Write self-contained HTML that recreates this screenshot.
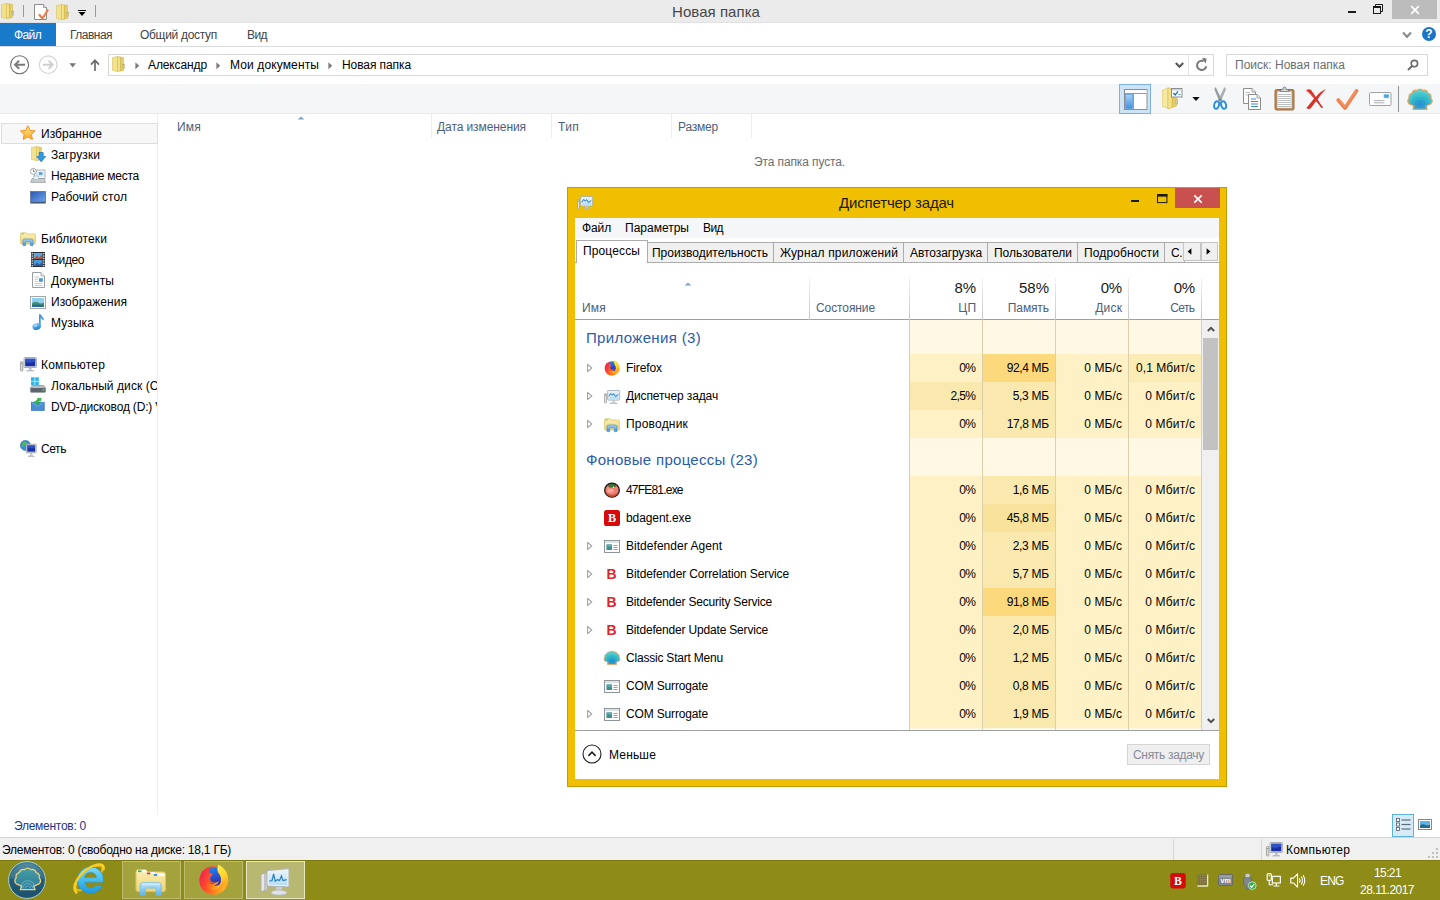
<!DOCTYPE html>
<html><head><meta charset="utf-8"><title>Desktop</title>
<style>
*{box-sizing:border-box;margin:0;padding:0}
html,body{width:1440px;height:900px;overflow:hidden;background:#fff;font-family:"Liberation Sans",sans-serif;font-size:12px;color:#000}
.a{position:absolute}
.t{position:absolute;white-space:nowrap}
svg{overflow:visible}
</style></head><body>
<svg width="0" height="0" style="position:absolute"><defs>
<linearGradient id="gFold" x1="0" y1="0" x2="1" y2="0"><stop offset="0" stop-color="#f7eaa0"/><stop offset="0.45" stop-color="#efd96f"/><stop offset="0.5" stop-color="#d9bf55"/><stop offset="1" stop-color="#f2df7e"/></linearGradient>
<linearGradient id="gFoldV" x1="0" y1="0" x2="0" y2="1"><stop offset="0" stop-color="#fbf0b8"/><stop offset="1" stop-color="#edd373"/></linearGradient>
<linearGradient id="gBlueV" x1="0" y1="0" x2="0" y2="1"><stop offset="0" stop-color="#a9d2f7"/><stop offset="1" stop-color="#3d8fe0"/></linearGradient>
<linearGradient id="gDesk" x1="0" y1="0" x2="1" y2="1"><stop offset="0" stop-color="#2a57b5"/><stop offset="1" stop-color="#6ea4ea"/></linearGradient>
<linearGradient id="gStar" x1="0" y1="0" x2="0" y2="1"><stop offset="0" stop-color="#ffe88a"/><stop offset="1" stop-color="#f9a825"/></linearGradient>
<radialGradient id="gShell" cx="0.5" cy="0.75" r="0.75"><stop offset="0" stop-color="#2b8fd8"/><stop offset="0.45" stop-color="#2fb6c9"/><stop offset="1" stop-color="#5fdad4"/></radialGradient>
<linearGradient id="gOrb" x1="0" y1="0" x2="0" y2="1"><stop offset="0" stop-color="#3f8297"/><stop offset="0.5" stop-color="#235c78"/><stop offset="1" stop-color="#1b4f6e"/></linearGradient>
<radialGradient id="gFx" cx="0.5" cy="0.3" r="0.8"><stop offset="0" stop-color="#ffd43b"/><stop offset="0.45" stop-color="#ff9a1f"/><stop offset="0.8" stop-color="#f2443a"/><stop offset="1" stop-color="#d81f5a"/></radialGradient>
<linearGradient id="gMon" x1="0" y1="0" x2="0" y2="1"><stop offset="0" stop-color="#e8f4fc"/><stop offset="1" stop-color="#b8dcf2"/></linearGradient>
<linearGradient id="gMusic" x1="0" y1="0" x2="0" y2="1"><stop offset="0" stop-color="#7cc4f5"/><stop offset="1" stop-color="#1c7fd6"/></linearGradient>
<linearGradient id="gFxL" x1="0" y1="0.3" x2="1" y2="0.7"><stop offset="0" stop-color="#f0264f"/><stop offset="0.35" stop-color="#ff4a2a"/><stop offset="0.7" stop-color="#ff8a1c"/><stop offset="1" stop-color="#ffc52a"/></linearGradient>
<linearGradient id="gFxY" x1="0" y1="0" x2="0.3" y2="1"><stop offset="0" stop-color="#fff04a"/><stop offset="0.6" stop-color="#ffcf2e"/><stop offset="1" stop-color="#ff9a1e"/></linearGradient>
<linearGradient id="gGlobe" x1="0" y1="0" x2="0.2" y2="1"><stop offset="0" stop-color="#1f86f2"/><stop offset="0.55" stop-color="#2455d8"/><stop offset="1" stop-color="#3b2a9a"/></linearGradient>
<linearGradient id="gIE" x1="0" y1="0" x2="0" y2="1"><stop offset="0" stop-color="#7fdcfa"/><stop offset="0.5" stop-color="#45bdee"/><stop offset="1" stop-color="#1f9ada"/></linearGradient>
<linearGradient id="gOrbShell" x1="0" y1="0" x2="0" y2="1"><stop offset="0" stop-color="#46a0a6"/><stop offset="1" stop-color="#2a7894"/></linearGradient>
<linearGradient id="gBlueL" x1="0" y1="0" x2="0" y2="1"><stop offset="0" stop-color="#c4e8fa"/><stop offset="1" stop-color="#58b4ea"/></linearGradient>
</defs></svg>
<div class="a" style="left:0px;top:0px;width:1440px;height:23px;background:#ebebeb;"></div>
<div class="a" style="left:0px;top:23px;width:1440px;height:24px;background:#fff;border-bottom:1px solid #dadbdc"></div>
<div class="a" style="left:0px;top:23px;width:56px;height:23px;background:#1979ca;"></div>
<div class="a" style="left:108px;top:54px;width:1106px;height:22px;background:#fff;border:1px solid #d9d9d9"></div>
<div class="a" style="left:1188px;top:55px;width:1px;height:20px;background:#e3e3e3;"></div>
<div class="a" style="left:1226px;top:54px;width:202px;height:22px;background:#fff;border:1px solid #d9d9d9"></div>
<div class="a" style="left:0px;top:84px;width:1440px;height:30px;background:#f5f6f7;border-bottom:1px solid #e8e9ea"></div>
<div class="a" style="left:157px;top:114px;width:1px;height:701px;background:#f0f0f0;"></div>
<div class="a" style="left:0px;top:837px;width:1440px;height:23px;background:#f0f0f0;border-top:1px solid #d4d4d4"></div>
<div class="t" style="left:672.00px;top:1.5px;font-size:15px;line-height:19px;height:19px;color:#474747;letter-spacing:0.051px;">Новая папка</div>
<div class="t" style="left:14.00px;top:27.0px;font-size:12px;line-height:16px;height:16px;color:#fff;letter-spacing:-0.625px;">Файл</div>
<div class="t" style="left:70.00px;top:27.0px;font-size:12px;line-height:16px;height:16px;color:#444;letter-spacing:-0.525px;">Главная</div>
<div class="t" style="left:140.00px;top:27.0px;font-size:12px;line-height:16px;height:16px;color:#444;letter-spacing:-0.302px;">Общий доступ</div>
<div class="t" style="left:247.00px;top:27.0px;font-size:12px;line-height:16px;height:16px;color:#444;letter-spacing:-0.568px;">Вид</div>
<div class="t" style="left:148.00px;top:57.0px;font-size:12px;line-height:16px;height:16px;color:#000;letter-spacing:-0.115px;">Александр</div>
<div class="t" style="left:230.00px;top:57.0px;font-size:12px;line-height:16px;height:16px;color:#000;letter-spacing:0.120px;">Мои документы</div>
<div class="t" style="left:342.00px;top:57.0px;font-size:12px;line-height:16px;height:16px;color:#000;letter-spacing:-0.085px;">Новая папка</div>
<div class="t" style="left:1235.00px;top:57.0px;font-size:12px;line-height:16px;height:16px;color:#6d6d6d;letter-spacing:0.009px;">Поиск: Новая папка</div>
<div class="t" style="left:177.00px;top:119.0px;font-size:12px;line-height:16px;height:16px;color:#4c607a;letter-spacing:0.208px;">Имя</div>
<div class="t" style="left:437.00px;top:119.0px;font-size:12px;line-height:16px;height:16px;color:#4c607a;letter-spacing:-0.081px;">Дата изменения</div>
<div class="t" style="left:558.00px;top:119.0px;font-size:12px;line-height:16px;height:16px;color:#4c607a;letter-spacing:0.333px;">Тип</div>
<div class="t" style="left:678.00px;top:119.0px;font-size:12px;line-height:16px;height:16px;color:#4c607a;letter-spacing:-0.206px;">Размер</div>
<div class="a" style="left:431px;top:114px;width:1px;height:24px;background:#ececec;"></div>
<div class="a" style="left:551px;top:114px;width:1px;height:24px;background:#ececec;"></div>
<div class="a" style="left:671px;top:114px;width:1px;height:24px;background:#ececec;"></div>
<div class="a" style="left:751px;top:114px;width:1px;height:24px;background:#ececec;"></div>
<div class="t" style="left:754.00px;top:154.0px;font-size:12px;line-height:16px;height:16px;color:#6d6d6d;letter-spacing:-0.118px;">Эта папка пуста.</div>
<div class="a" style="left:1px;top:123px;width:157px;height:21px;background:#f7f7f7;border:1px solid #dedede"></div>
<div class="t" style="left:41.00px;top:126.0px;font-size:12px;line-height:16px;height:16px;color:#000;letter-spacing:0.023px;">Избранное</div>
<div class="t" style="left:51.00px;top:147.0px;font-size:12px;line-height:16px;height:16px;color:#000;letter-spacing:0.090px;">Загрузки</div>
<div class="t" style="left:51.00px;top:168.0px;font-size:12px;line-height:16px;height:16px;color:#000;letter-spacing:-0.243px;">Недавние места</div>
<div class="t" style="left:51.00px;top:189.0px;font-size:12px;line-height:16px;height:16px;color:#000;letter-spacing:0.057px;">Рабочий стол</div>
<div class="t" style="left:41.00px;top:231.0px;font-size:12px;line-height:16px;height:16px;color:#000;letter-spacing:0.098px;">Библиотеки</div>
<div class="t" style="left:51.00px;top:252.0px;font-size:12px;line-height:16px;height:16px;color:#000;letter-spacing:-0.409px;">Видео</div>
<div class="t" style="left:51.00px;top:273.0px;font-size:12px;line-height:16px;height:16px;color:#000;letter-spacing:0.127px;">Документы</div>
<div class="t" style="left:51.00px;top:294.0px;font-size:12px;line-height:16px;height:16px;color:#000;letter-spacing:0.054px;">Изображения</div>
<div class="t" style="left:51.00px;top:315.0px;font-size:12px;line-height:16px;height:16px;color:#000;letter-spacing:0.091px;">Музыка</div>
<div class="t" style="left:41.00px;top:357.0px;font-size:12px;line-height:16px;height:16px;color:#000;letter-spacing:0.212px;">Компьютер</div>
<div class="t" style="left:41.00px;top:441.0px;font-size:12px;line-height:16px;height:16px;color:#000;letter-spacing:-0.426px;">Сеть</div>
<div class="t" style="left:51.00px;top:378.0px;font-size:12px;line-height:16px;height:16px;color:#000;letter-spacing:0.076px;width:106px;overflow:hidden;">Локальный диск (C:)</div>
<div class="t" style="left:51.00px;top:399.0px;font-size:12px;line-height:16px;height:16px;color:#000;letter-spacing:-0.170px;width:106px;overflow:hidden;">DVD-дисковод (D:) VM</div>
<div class="t" style="left:14.00px;top:818.0px;font-size:12px;line-height:16px;height:16px;color:#1e3287;letter-spacing:-0.266px;">Элементов: 0</div>
<div class="t" style="left:2.00px;top:842.0px;font-size:12px;line-height:16px;height:16px;color:#000;letter-spacing:-0.230px;">Элементов: 0 (свободно на диске: 18,1 ГБ)</div>
<div class="t" style="left:1286.00px;top:842.0px;font-size:12px;line-height:16px;height:16px;color:#000;letter-spacing:0.212px;">Компьютер</div>
<div class="a" style="left:1173px;top:839px;width:1px;height:21px;background:#d7d7d7;"></div>
<div class="a" style="left:1261px;top:839px;width:1px;height:21px;background:#d7d7d7;"></div>
<svg class="a" style="left:1px;top:3px" width="13" height="16" viewBox="0 0 13 16"><path d="M0.5 1.5 L5.5 0.5 L5.5 15.5 L0.5 14.5 Z" fill="#f3e28d" stroke="#d8c25e" stroke-width="0.6"/><path d="M5.5 0.5 L11.5 1.5 L11.5 14.5 L5.5 15.5 Z" fill="url(#gFold)" stroke="#cdb352" stroke-width="0.6"/><rect x="10.8" y="8.0" width="1.8" height="4.48" fill="#c9c29a" stroke="#b5a85e" stroke-width="0.4"/></svg>
<div class="a" style="left:23px;top:5px;width:1px;height:12px;background:#9a9a9a;"></div>
<svg class="a" style="left:34px;top:4px" width="15" height="16" viewBox="0 0 15 16"><path d="M0.5 0.5 H9.5 L12.5 3.5 V15.5 H0.5 Z" fill="#fff" stroke="#8c8c8c" stroke-width="1"/><path d="M9.5 0.5 V3.5 H12.5" fill="#e8e8e8" stroke="#8c8c8c" stroke-width="0.8"/><path d="M5.5 11 L8.5 14.5 L13.5 6.5" fill="none" stroke="#ef7b45" stroke-width="2.2" stroke-linecap="round" stroke-linejoin="round"/></svg>
<svg class="a" style="left:56px;top:4px" width="13" height="16" viewBox="0 0 13 16"><path d="M0.5 1.5 L5.5 0.5 L5.5 15.5 L0.5 14.5 Z" fill="#f3e28d" stroke="#d8c25e" stroke-width="0.6"/><path d="M5.5 0.5 L11.5 1.5 L11.5 14.5 L5.5 15.5 Z" fill="url(#gFold)" stroke="#cdb352" stroke-width="0.6"/><rect x="10.8" y="8.0" width="1.8" height="4.48" fill="#c9c29a" stroke="#b5a85e" stroke-width="0.4"/></svg>
<div class="a" style="left:78px;top:10px;width:8px;height:1px;background:#000;"></div>
<svg class="a" style="left:78px;top:12px" width="8" height="4" viewBox="0 0 8 4"><path d="M0.5 0 H7.5 L4 4 Z" fill="#000"/></svg>
<div class="a" style="left:95px;top:5px;width:1px;height:12px;background:#9a9a9a;"></div>
<div class="a" style="left:1348px;top:11px;width:8px;height:2px;background:#1a1a1a;"></div>
<svg class="a" style="left:1372px;top:4px" width="12" height="11" viewBox="0 0 12 11"><path d="M3.5 2.5 V0.5 H10.5 V7.5 H8.5" fill="none" stroke="#1a1a1a" stroke-width="1"/><rect x="1.5" y="2.5" width="7" height="7" fill="none" stroke="#1a1a1a" stroke-width="1"/><rect x="1" y="2" width="8" height="2" fill="#1a1a1a"/></svg>
<div class="a" style="left:1392px;top:0px;width:45px;height:19px;background:#bcbcbc;"></div>
<svg class="a" style="left:1410px;top:4.6px" width="10" height="10" viewBox="0 0 10 10"><path d="M1.2 1.2 L8.8 8.8 M8.8 1.2 L1.2 8.8" stroke="#fff" stroke-width="1.7"/></svg>
<div class="a" style="left:0px;top:22px;width:1440px;height:1px;background:#e2e2e2;"></div>
<svg class="a" style="left:1402px;top:31px" width="10" height="8" viewBox="0 0 10 8"><path d="M1 1.5 L5 5.8 L9 1.5" fill="none" stroke="#8c8c8c" stroke-width="2.2"/></svg>
<svg class="a" style="left:1422px;top:27px" width="14" height="14" viewBox="0 0 14 14"><circle cx="7" cy="7" r="7" fill="#1b74c9"/><text x="7" y="11.3" font-family="Liberation Sans,sans-serif" font-weight="bold" font-size="12" fill="#fff" text-anchor="middle">?</text></svg>
<svg class="a" style="left:10px;top:55px" width="20" height="20" viewBox="0 0 20 20"><circle cx="9.6" cy="9.7" r="9" fill="none" stroke="#6e6e6e" stroke-width="1.1"/><path d="M15 9.7 H5.2 M9.2 5.6 L5 9.7 L9.2 13.8" fill="none" stroke="#7a7a7a" stroke-width="1.9"/></svg>
<svg class="a" style="left:38px;top:55px" width="20" height="20" viewBox="0 0 20 20"><circle cx="10.2" cy="9.7" r="8.8" fill="none" stroke="#d2d2d2" stroke-width="1.1"/><path d="M4.8 9.7 H14.6 M10.6 5.6 L14.8 9.7 L10.6 13.8" fill="none" stroke="#cfcfcf" stroke-width="1.9"/></svg>
<svg class="a" style="left:69px;top:63px" width="8" height="5" viewBox="0 0 8 5"><path d="M0.4 0.2 H7 L3.7 4.4 Z" fill="#777"/></svg>
<svg class="a" style="left:90px;top:59px" width="10" height="13" viewBox="0 0 10 13"><path d="M5 12 V1.6 M1 5.6 L5 1.2 L9 5.6" fill="none" stroke="#6a6a6a" stroke-width="1.7"/></svg>
<svg class="a" style="left:112px;top:56px" width="13" height="16" viewBox="0 0 13 16"><path d="M0.5 1.5 L5.5 0.5 L5.5 15.5 L0.5 14.5 Z" fill="#f3e28d" stroke="#d8c25e" stroke-width="0.6"/><path d="M5.5 0.5 L11.5 1.5 L11.5 14.5 L5.5 15.5 Z" fill="url(#gFold)" stroke="#cdb352" stroke-width="0.6"/><rect x="10.8" y="8.0" width="1.8" height="4.48" fill="#c9c29a" stroke="#b5a85e" stroke-width="0.4"/></svg>
<svg class="a" style="left:135px;top:62px" width="5" height="8" viewBox="0 0 5 8"><path d="M0.4 0.3 L4.2 3.8 L0.4 7.3 Z" fill="#7a7a7a"/></svg>
<svg class="a" style="left:216px;top:62px" width="5" height="8" viewBox="0 0 5 8"><path d="M0.4 0.3 L4.2 3.8 L0.4 7.3 Z" fill="#7a7a7a"/></svg>
<svg class="a" style="left:328px;top:62px" width="5" height="8" viewBox="0 0 5 8"><path d="M0.4 0.3 L4.2 3.8 L0.4 7.3 Z" fill="#7a7a7a"/></svg>
<svg class="a" style="left:1175px;top:62px" width="9" height="7" viewBox="0 0 9 7"><path d="M0.8 1 L4.5 4.8 L8.2 1" fill="none" stroke="#555" stroke-width="2"/></svg>
<svg class="a" style="left:1195px;top:58px" width="13" height="14" viewBox="0 0 13 14"><path d="M8.6 3.2 A4.6 4.6 0 1 0 11.2 8.2" fill="none" stroke="#777" stroke-width="2"/><path d="M6.8 0 L11.6 0.6 L10.6 5.6 Z" fill="#777"/></svg>
<svg class="a" style="left:1407px;top:59px" width="12" height="12" viewBox="0 0 12 12"><circle cx="7.4" cy="4.6" r="3.2" fill="none" stroke="#6a6a6a" stroke-width="1.6"/><path d="M5 7 L1 11" stroke="#6a6a6a" stroke-width="2"/></svg>
<div class="a" style="left:1119px;top:84px;width:32px;height:30px;background:#cde4f8;border:1px solid #7ab0e6"></div>
<svg class="a" style="left:1124px;top:89px" width="24" height="21" viewBox="0 0 24 21"><rect x="0.5" y="0.5" width="22.5" height="20" fill="#fff" stroke="#8d8d8d" stroke-width="1"/><rect x="1" y="1" width="21.5" height="3.5" fill="#fdfdfd"/><path d="M1 4.5 H22.5" stroke="#9a9a9a" stroke-width="1"/><rect x="1.5" y="5.5" width="7" height="14" fill="url(#gBlueV)" stroke="#5a9fe2" stroke-width="0.8"/><path d="M9.5 5 V20" stroke="#9a9a9a" stroke-width="1"/></svg>
<svg class="a" style="left:1162px;top:87px" width="21" height="23" viewBox="0 0 21 23"><path d="M0.5 3 L6 0.8 L6 21 L0.5 19.5 Z" fill="#f6e9a0" stroke="#dcc76a" stroke-width="0.6"/><path d="M6 0.8 L14.5 3.5 L14.5 19 L6 22 Z" fill="url(#gFold)" stroke="#cdb352" stroke-width="0.6"/><rect x="13.6" y="12" width="2.2" height="5" fill="#cfc8a0" stroke="#b5a85e" stroke-width="0.4"/><rect x="9.5" y="1.5" width="10.5" height="8.5" fill="#fff" stroke="#8a8f96" stroke-width="1"/><rect x="10" y="2" width="9.5" height="1.6" fill="#c9d4e2"/><path d="M11.4 6 L13.2 8 L16 4.4" fill="none" stroke="#1d6fc4" stroke-width="1.3"/><path d="M16.5 7.5 H18.5" stroke="#4a86c8" stroke-width="1"/></svg>
<svg class="a" style="left:1192px;top:97px" width="8" height="4" viewBox="0 0 8 4"><path d="M0.3 0 H7.7 L4 4 Z" fill="#111"/></svg>
<svg class="a" style="left:1213px;top:87px" width="15" height="23" viewBox="0 0 15 23"><path d="M2.6 0.6 L8.6 13.2 L6.6 14.2 L1.8 2.4 Z" fill="#9a9fa6" stroke="#7d838a" stroke-width="0.5"/><path d="M11.6 0.6 L5.6 13.2 L7.6 14.2 L12.4 2.4 Z" fill="#b4b9bf" stroke="#7d838a" stroke-width="0.5"/><ellipse cx="3.6" cy="18" rx="2.4" ry="3.8" transform="rotate(18 3.6 18)" fill="none" stroke="#2c8fdc" stroke-width="1.9"/><ellipse cx="10.6" cy="18" rx="2.4" ry="3.8" transform="rotate(-18 10.6 18)" fill="none" stroke="#2c8fdc" stroke-width="1.9"/><circle cx="7.1" cy="12.6" r="1" fill="#6d7379"/></svg>
<svg class="a" style="left:1243px;top:88px" width="19" height="22" viewBox="0 0 19 22"><path d="M0.5 0.5 H9 L12.5 4 V15.5 H0.5 Z" fill="#fff" stroke="#8d8d8d" stroke-width="1"/><path d="M9 0.5 V4 H12.5" fill="#eee" stroke="#8d8d8d" stroke-width="0.8"/><path d="M2.5 4.5 H7 M2.5 7 H5" stroke="#b5b5b5" stroke-width="0.9"/><path d="M5.5 6.5 H14 L17.5 10 V21.5 H5.5 Z" fill="#fff" stroke="#8d8d8d" stroke-width="1"/><path d="M14 6.5 V10 H17.5" fill="#eee" stroke="#8d8d8d" stroke-width="0.8"/><path d="M8 11 H13 M8 13.5 H15 M8 16 H15 M8 18.5 H15" stroke="#3e8fd0" stroke-width="1"/></svg>
<svg class="a" style="left:1274px;top:86px" width="21" height="25" viewBox="0 0 21 25"><rect x="1" y="3.5" width="19" height="20.5" rx="1.5" fill="#b8895a" stroke="#9b6f40" stroke-width="1"/><rect x="3.2" y="5.5" width="14.6" height="16.5" fill="#fff" stroke="#c7b8a4" stroke-width="0.5"/><path d="M4 8.5 H17 M4 10.5 H17 M4 12.5 H17 M4 14.5 H17 M4 16.5 H17 M4 18.5 H17 M4 20.5 H17" stroke="#a9adb3" stroke-width="0.8"/><path d="M6 5.6 Q6 3.6 8.6 3.4 Q9 1 10.5 1 Q12 1 12.4 3.4 Q15 3.6 15 5.6 Z" fill="#d7d9dc" stroke="#70757b" stroke-width="0.8"/><circle cx="10.5" cy="2.8" r="0.8" fill="#fff" stroke="#70757b" stroke-width="0.4"/></svg>
<svg class="a" style="left:1305px;top:88px" width="22" height="22" viewBox="0 0 22 22"><path d="M1 2.2 Q4.5 0.6 6 2 Q9.5 6.5 10.8 9 Q15 3.5 21 1 Q16.8 5.2 12.6 11.2 Q15 15.5 18.2 19.6 Q16.5 20.4 15.6 19 Q13.4 15.6 11 13.2 Q8 17.5 5.6 20.6 Q3 21.4 1.4 20 Q5.6 15 9 10.6 Q5.5 5.6 1 2.2 Z" fill="#d4342a"/><path d="M2 2.4 Q5.6 5.4 9.4 10.4" stroke="#e9665c" stroke-width="0.8" fill="none"/></svg>
<svg class="a" style="left:1336px;top:88px" width="23" height="23" viewBox="0 0 23 23"><path d="M2.2 12 L9 20 L20.6 2.8" fill="none" stroke="#ee7d46" stroke-width="3.6" stroke-linecap="round" stroke-linejoin="round"/><path d="M2.6 11.6 L9 19 L20.2 2.6" fill="none" stroke="#f7a277" stroke-width="1" stroke-linecap="round" stroke-linejoin="round"/></svg>
<svg class="a" style="left:1369px;top:92px" width="23" height="14" viewBox="0 0 23 14"><rect x="0.5" y="0.5" width="21.5" height="13" rx="1" fill="#fdfdfd" stroke="#9ea3a9" stroke-width="1"/><rect x="15" y="2.5" width="4.8" height="3.4" fill="#4aa3df" stroke="#7fc0ea" stroke-width="0.5"/><path d="M5 8.6 H15.5 M5 10.8 H15.5" stroke="#a4a8ad" stroke-width="0.9"/></svg>
<div class="a" style="left:1398px;top:86px;width:1px;height:26px;background:#8f8f8f;"></div>
<svg class="a" style="left:1408px;top:89px" width="24" height="21" viewBox="0 0 24 21"><path d="M5 20.4 L6.4 17 L1.29 14.96 Q-1.49 12.19 1.11 9.27 Q0.18 5.48 3.96 4.28 Q5.13 0.52 9.05 1.38 Q12.00 -1.30 14.95 1.38 Q18.87 0.52 20.04 4.28 Q23.82 5.48 22.89 9.27 Q25.49 12.19 22.71 14.96 L17.6 17 L19 20.4 Z" fill="url(#gShell)" stroke="#e9a15c" stroke-width="1.2" stroke-linejoin="round"/><path d="M9.6 19.31 A2.4 2.4 0 0 1 14.4 19.31" fill="none" stroke="#1f86c8" stroke-opacity="0.5" stroke-width="1"/><path d="M7.4 19.05 A4.6 4.6 0 0 1 16.6 19.05" fill="none" stroke="#1f86c8" stroke-opacity="0.5" stroke-width="1"/><path d="M5.2 18.78 A6.8 6.8 0 0 1 18.8 18.78" fill="none" stroke="#1f86c8" stroke-opacity="0.5" stroke-width="1"/></svg>
<svg class="a" style="left:20px;top:125px" width="16" height="15" viewBox="0 0 16 15"><path d="M7.8 0.7 L10 5.3 L15.2 5.9 L11.4 9.4 L12.4 14.4 L7.8 11.9 L3.2 14.4 L4.2 9.4 L0.4 5.9 L5.6 5.3 Z" fill="url(#gStar)" stroke="#f0932b" stroke-width="1" stroke-linejoin="round"/></svg>
<svg class="a" style="left:31px;top:146px" width="15" height="17" viewBox="0 0 15 17"><path d="M0.5 1.5 L5.5 0.5 L5.5 14.5 L0.5 13.5 Z" fill="#f3e28d" stroke="#d8c25e" stroke-width="0.6"/><path d="M5.5 0.5 L10.5 1.5 L10.5 13.5 L5.5 14.5 Z" fill="url(#gFold)" stroke="#cdb352" stroke-width="0.6"/><rect x="9.8" y="7.5" width="1.8" height="4.2" fill="#c9c29a" stroke="#b5a85e" stroke-width="0.4"/><path d="M8.2 6.5 H12.2 V10.5 H14.6 L10.2 15.8 L5.8 10.5 H8.2 Z" fill="#2f9be6" stroke="#1673c4" stroke-width="0.7"/></svg>
<svg class="a" style="left:30px;top:168px" width="16" height="15" viewBox="0 0 16 15"><rect x="4.5" y="2" width="10.5" height="8.5" fill="#f4f6f8" stroke="#9aa0a6" stroke-width="0.8"/><rect x="6" y="3.4" width="7.5" height="5" fill="#d8e9f6"/><rect x="9" y="4.2" width="3.4" height="2.6" fill="#4d9fdc"/><path d="M2.2 10.5 H14 L15.6 14.4 H0.6 Z" fill="#c9cdd1" stroke="#8f959b" stroke-width="0.7"/><rect x="3.6" y="8" width="5" height="3.2" fill="#e9f2f9" stroke="#8aa" stroke-width="0.5"/><circle cx="3.4" cy="3.4" r="3" fill="#fafafa" stroke="#8f959b" stroke-width="0.8"/><path d="M3.4 1.6 V3.6 H5" fill="none" stroke="#555" stroke-width="0.7"/></svg>
<svg class="a" style="left:30px;top:191px" width="16" height="13" viewBox="0 0 16 13"><rect x="0.5" y="0.5" width="15" height="10.2" fill="url(#gDesk)" stroke="#5b6f9a" stroke-width="0.8"/><rect x="0.3" y="10.4" width="15.4" height="2.1" fill="#3a4a6b"/><rect x="0.3" y="10.4" width="15.4" height="0.8" fill="#8796b8"/></svg>
<svg class="a" style="left:20px;top:232px" width="16" height="14" viewBox="0 0 16 14"><path d="M0.6 2.4 Q0.6 0.8 2 0.8 H6 L7.2 2 H14.2 Q15.4 2 15.4 3.2 V11 Q15.4 12 14.4 12 H1.6 Q0.6 12 0.6 11 Z" fill="url(#gFoldV)" stroke="#dcc463" stroke-width="0.8"/><rect x="1.4" y="1.4" width="2.2" height="1" fill="#7cc24a"/><path d="M3 13.6 V8.6 Q3 7 4.6 7 H11.4 Q13 7 13 8.6 V13.6 H10.4 V10.4 Q10.4 9.8 9.8 9.8 H6.2 Q5.6 9.8 5.6 10.4 V13.6 Z" fill="url(#gBlueV)" stroke="#2f86d6" stroke-width="0.6"/></svg>
<svg class="a" style="left:31px;top:252px" width="14" height="15" viewBox="0 0 14 15"><rect x="0" y="0" width="14" height="15" fill="#2d2f33"/><rect x="2.6" y="1" width="8.8" height="6" fill="#5aa9e6"/><rect x="2.6" y="8" width="8.8" height="6" fill="#4a9ae0"/><path d="M2.6 7 L6 3.6 L8 5.4 L11.4 2.4 V7 Z" fill="#b0583a"/><path d="M2.6 14 L6 10.5 L8.4 12.6 L11.4 10 V14 Z" fill="#2c5c9c"/><rect x="0.6" y="1.0" width="1.3" height="1.3" fill="#e9e9e9"/><rect x="12.1" y="1.0" width="1.3" height="1.3" fill="#e9e9e9"/><rect x="0.6" y="3.4" width="1.3" height="1.3" fill="#e9e9e9"/><rect x="12.1" y="3.4" width="1.3" height="1.3" fill="#e9e9e9"/><rect x="0.6" y="5.8" width="1.3" height="1.3" fill="#e9e9e9"/><rect x="12.1" y="5.8" width="1.3" height="1.3" fill="#e9e9e9"/><rect x="0.6" y="8.2" width="1.3" height="1.3" fill="#e9e9e9"/><rect x="12.1" y="8.2" width="1.3" height="1.3" fill="#e9e9e9"/><rect x="0.6" y="10.6" width="1.3" height="1.3" fill="#e9e9e9"/><rect x="12.1" y="10.6" width="1.3" height="1.3" fill="#e9e9e9"/><rect x="0.6" y="13.0" width="1.3" height="1.3" fill="#e9e9e9"/><rect x="12.1" y="13.0" width="1.3" height="1.3" fill="#e9e9e9"/></svg>
<svg class="a" style="left:32px;top:272px" width="14" height="16" viewBox="0 0 14 16"><path d="M0.5 0.5 H9 L12.5 4 V15.5 H0.5 Z" fill="#fff" stroke="#9a9ea3" stroke-width="1"/><path d="M9 0.5 V4 H12.5" fill="#eceff2" stroke="#9a9ea3" stroke-width="0.8"/><path d="M2.5 5 H7 M2.5 7.2 H6 M2.5 9.4 H6 M2.5 11.6 H10.5 M2.5 13.6 H10.5" stroke="#b7c3d0" stroke-width="0.9"/><rect x="7" y="6.2" width="3.8" height="3.6" fill="#4b94d8"/></svg>
<svg class="a" style="left:30px;top:296px" width="16" height="13" viewBox="0 0 16 13"><rect x="0.5" y="0.5" width="15" height="12" fill="#fdfdfd" stroke="#a2a7ad" stroke-width="1"/><rect x="2" y="2" width="12" height="9" fill="#8fd0ee"/><path d="M2 7.5 Q5 4.6 8 6.6 Q11 8.4 14 6.4 V11 H2 Z" fill="#3f8f6a"/><path d="M2 9 Q7 7.6 14 9.4 V11 H2 Z" fill="#2a6a9a"/></svg>
<svg class="a" style="left:32px;top:314px" width="13" height="17" viewBox="0 0 13 17"><path d="M7.2 0.5 Q8 4.6 12.2 6.6 Q11.6 3.6 8.6 0.4 Z" fill="#3b97e3"/><rect x="7" y="0.5" width="1.7" height="12.5" fill="#3b97e3"/><ellipse cx="4.6" cy="12.6" rx="4.2" ry="3.3" transform="rotate(-20 4.6 12.6)" fill="url(#gMusic)"/><ellipse cx="3.8" cy="11.6" rx="1.8" ry="1" transform="rotate(-20 3.8 11.6)" fill="#cfe8fb" opacity="0.8"/></svg>
<svg class="a" style="left:20px;top:357px" width="17" height="15" viewBox="0 0 17 15"><rect x="0.5" y="4.5" width="2.4" height="9.5" rx="0.8" fill="#d9d9d9" stroke="#8e8e8e" stroke-width="0.7"/><rect x="1.1" y="6" width="1.2" height="1" fill="#4caf50"/><rect x="4" y="0.5" width="12.5" height="10" rx="0.8" fill="#dfe3e8" stroke="#9aa0a8" stroke-width="0.8"/><rect x="5.2" y="1.7" width="10.1" height="7.6" fill="#1a2fa3"/><path d="M5.2 1.7 H15.3 V4.5 Q10 6.5 5.2 5 Z" fill="#3a5fd0" opacity="0.75"/><rect x="9" y="10.5" width="2.6" height="2" fill="#b8bcc2"/><path d="M6.5 14 Q10.3 11.8 14 14 Z" fill="#c4c8cd" stroke="#9aa0a8" stroke-width="0.5"/></svg>
<svg class="a" style="left:30px;top:377px" width="16" height="16" viewBox="0 0 16 16"><rect x="1" y="0.3" width="3.6" height="3.6" fill="#29b6e8"/><rect x="5.2" y="0.3" width="3.6" height="3.6" fill="#29b6e8"/><rect x="1" y="4.5" width="3.6" height="3.6" fill="#29b6e8"/><rect x="5.2" y="4.5" width="3.6" height="3.6" fill="#29b6e8"/><path d="M2.4 8.6 H13.6 L15.6 11 V14.6 Q15.6 15.4 14.8 15.4 H1.2 Q0.4 15.4 0.4 14.6 V11 Z" fill="#b9bec3" stroke="#7f858b" stroke-width="0.7"/><rect x="0.8" y="11" width="14.4" height="4" rx="0.6" fill="#5d666e"/><rect x="12.4" y="12.4" width="1.8" height="1.2" fill="#6fdc5a"/></svg>
<svg class="a" style="left:31px;top:398px" width="14" height="13" viewBox="0 0 14 13"><rect x="0.4" y="4.2" width="12.8" height="8.2" fill="#4a8fd6" stroke="#2f6db5" stroke-width="0.7"/><path d="M0.4 4.2 L6.8 8 L13.2 4.2" fill="none" stroke="#7cb2ea" stroke-width="0.8"/><path d="M10.2 0.2 L9.6 3 L8.6 2.2 Q7 4.2 7.2 7.4 L3.2 4 L4.8 3.4 Q5.6 1.4 7.4 1 L6.6 0.2 Z" fill="#35c24a" stroke="#1e8e30" stroke-width="0.5"/></svg>
<svg class="a" style="left:20px;top:440px" width="17" height="17" viewBox="0 0 17 17"><circle cx="5.4" cy="5.4" r="5" fill="#3a8fd8" stroke="#2a6cb0" stroke-width="0.6"/><path d="M2 3.2 Q4 1 6.4 2 Q7.4 3.6 5.4 4.6 Q3.4 5 3.6 7 Q2 6.4 2 3.2 Z M6.4 6.2 Q8.6 5.6 9.6 7 Q8.8 9.4 6.8 9.8 Q6 8 6.4 6.2 Z" fill="#4cc04a"/><rect x="6.2" y="4.2" width="10" height="8.6" rx="0.6" fill="#dfe3e8" stroke="#9aa0a8" stroke-width="0.8"/><rect x="7.3" y="5.3" width="7.8" height="6.4" fill="#1a2fa3"/><path d="M7.3 5.3 H15.1 V7.6 Q11 9 7.3 8 Z" fill="#3a5fd0" opacity="0.7"/><rect x="10" y="12.8" width="2.4" height="1.8" fill="#b8bcc2"/><path d="M8 16.4 Q11.2 14.4 14.4 16.4 Z" fill="#c4c8cd" stroke="#9aa0a8" stroke-width="0.5"/></svg>
<div class="a" style="left:1392px;top:814px;width:22px;height:23px;background:#d6ebf8;border:1px solid #5cb3e0"></div>
<svg class="a" style="left:1396px;top:818px" width="15" height="14" viewBox="0 0 15 14"><rect x="0.5" y="0.5" width="3" height="3" fill="#fff" stroke="#5f6b78" stroke-width="0.9"/><path d="M5.5 2.0 H14.5" stroke="#5f6b78" stroke-width="1.2"/><rect x="0.5" y="5.0" width="3" height="3" fill="#fff" stroke="#5f6b78" stroke-width="0.9"/><path d="M5.5 6.5 H14.5" stroke="#5f6b78" stroke-width="1.2"/><rect x="0.5" y="9.5" width="3" height="3" fill="#fff" stroke="#5f6b78" stroke-width="0.9"/><path d="M5.5 11.0 H14.5" stroke="#5f6b78" stroke-width="1.2"/></svg>
<svg class="a" style="left:1418px;top:819px" width="14" height="11" viewBox="0 0 14 11"><rect x="0.5" y="0.5" width="13" height="10" fill="#fff" stroke="#7f8790" stroke-width="1"/><rect x="2" y="2" width="10" height="7" fill="#5db4e6"/><path d="M2 6.4 Q5 4.4 7.6 6 Q10 7 12 5.6 V9 H2 Z" fill="#2d6a8a"/></svg>
<svg class="a" style="left:1266px;top:842px" width="17" height="15" viewBox="0 0 17 15"><rect x="0.5" y="4.5" width="2.4" height="9.5" rx="0.8" fill="#d9d9d9" stroke="#8e8e8e" stroke-width="0.7"/><rect x="1.1" y="6" width="1.2" height="1" fill="#4caf50"/><rect x="4" y="0.5" width="12.5" height="10" rx="0.8" fill="#dfe3e8" stroke="#9aa0a8" stroke-width="0.8"/><rect x="5.2" y="1.7" width="10.1" height="7.6" fill="#1a2fa3"/><path d="M5.2 1.7 H15.3 V4.5 Q10 6.5 5.2 5 Z" fill="#3a5fd0" opacity="0.75"/><rect x="9" y="10.5" width="2.6" height="2" fill="#b8bcc2"/><path d="M6.5 14 Q10.3 11.8 14 14 Z" fill="#c4c8cd" stroke="#9aa0a8" stroke-width="0.5"/></svg>
<div class="a" style="left:1428px;top:856px;width:2px;height:2px;background:#bfbfbf;"></div>
<div class="a" style="left:1432px;top:856px;width:2px;height:2px;background:#bfbfbf;"></div>
<div class="a" style="left:1436px;top:856px;width:2px;height:2px;background:#bfbfbf;"></div>
<div class="a" style="left:1432px;top:852px;width:2px;height:2px;background:#bfbfbf;"></div>
<div class="a" style="left:1436px;top:852px;width:2px;height:2px;background:#bfbfbf;"></div>
<div class="a" style="left:1436px;top:848px;width:2px;height:2px;background:#bfbfbf;"></div>
<svg class="a" style="left:297px;top:116px" width="8" height="4" viewBox="0 0 8 4"><path d="M0.6 3.6 L4 0.6 L7.4 3.6 Z" fill="#7fa4c4"/></svg>
<div class="a" style="left:567px;top:187px;width:660px;height:600px;background:#f0c000;border:1px solid #c79b00"></div>
<div class="a" style="left:575px;top:218px;width:644px;height:561px;background:#fff;"></div>
<div class="t" style="left:839.00px;top:192.5px;font-size:15px;line-height:19px;height:19px;color:#1a1a1a;letter-spacing:-0.156px;">Диспетчер задач</div>
<div class="a" style="left:1175px;top:188px;width:45px;height:20px;background:#c8514f;"></div>
<div class="a" style="left:575px;top:218px;width:644px;height:20px;background:#f5f6f7;"></div>
<div class="t" style="left:582.00px;top:220.0px;font-size:12px;line-height:16px;height:16px;color:#000;letter-spacing:-0.125px;">Файл</div>
<div class="t" style="left:625.00px;top:220.0px;font-size:12px;line-height:16px;height:16px;color:#000;">Параметры</div>
<div class="t" style="left:703.00px;top:220.0px;font-size:12px;line-height:16px;height:16px;color:#000;letter-spacing:-0.568px;">Вид</div>
<div class="a" style="left:575px;top:262px;width:644px;height:1px;background:#acacac;"></div>
<div class="a" style="left:648px;top:242px;width:126px;height:21px;background:#f0f0f0;border:1px solid #acacac;border-left:none"></div>
<div class="t" style="left:652.00px;top:245.0px;font-size:12px;line-height:16px;height:16px;color:#000;letter-spacing:-0.025px;">Производительность</div>
<div class="a" style="left:774px;top:242px;width:130px;height:21px;background:#f0f0f0;border:1px solid #acacac;border-left:none"></div>
<div class="t" style="left:780.00px;top:245.0px;font-size:12px;line-height:16px;height:16px;color:#000;letter-spacing:0.154px;">Журнал приложений</div>
<div class="a" style="left:904px;top:242px;width:84px;height:21px;background:#f0f0f0;border:1px solid #acacac;border-left:none"></div>
<div class="t" style="left:910.00px;top:245.0px;font-size:12px;line-height:16px;height:16px;color:#000;letter-spacing:-0.064px;">Автозагрузка</div>
<div class="a" style="left:988px;top:242px;width:90px;height:21px;background:#f0f0f0;border:1px solid #acacac;border-left:none"></div>
<div class="t" style="left:994.00px;top:245.0px;font-size:12px;line-height:16px;height:16px;color:#000;letter-spacing:-0.025px;">Пользователи</div>
<div class="a" style="left:1078px;top:242px;width:87px;height:21px;background:#f0f0f0;border:1px solid #acacac;border-left:none"></div>
<div class="t" style="left:1084.00px;top:245.0px;font-size:12px;line-height:16px;height:16px;color:#000;letter-spacing:0.114px;">Подробности</div>
<div class="a" style="left:1165px;top:242px;width:20px;height:21px;background:#f0f0f0;border:1px solid #acacac;border-left:none"></div>
<div class="t" style="left:1171.00px;top:245.0px;font-size:12px;line-height:16px;height:16px;color:#000;letter-spacing:-0.500px;">С.</div>
<div class="a" style="left:576px;top:240px;width:72px;height:23px;background:#fff;border:1px solid #acacac;border-bottom:none"></div>
<div class="t" style="left:583.00px;top:243.0px;font-size:12px;line-height:16px;height:16px;color:#000;letter-spacing:0.125px;">Процессы</div>
<div class="a" style="left:1183px;top:242px;width:18px;height:19px;background:#f0f0f0;border:1px solid #c4c4c4"></div>
<div class="a" style="left:1201px;top:242px;width:17px;height:19px;background:#f0f0f0;border:1px solid #c4c4c4"></div>
<div class="t" style="left:582.00px;top:300.0px;font-size:12px;line-height:16px;height:16px;color:#4c607a;letter-spacing:0.208px;">Имя</div>
<div class="t" style="left:816.00px;top:300.0px;font-size:12px;line-height:16px;height:16px;color:#4c607a;letter-spacing:-0.097px;">Состояние</div>
<div class="t" style="left:954.41px;top:277.5px;font-size:15px;line-height:19px;height:19px;color:#1a1a1a;letter-spacing:-0.094px;">8%</div>
<div class="t" style="left:958.25px;top:300.0px;font-size:12px;line-height:16px;height:16px;color:#4c607a;letter-spacing:0.250px;">ЦП</div>
<div class="t" style="left:1018.99px;top:277.5px;font-size:15px;line-height:19px;height:19px;color:#1a1a1a;letter-spacing:-0.010px;">58%</div>
<div class="t" style="left:1007.87px;top:300.0px;font-size:12px;line-height:16px;height:16px;color:#4c607a;letter-spacing:-0.133px;">Память</div>
<div class="t" style="left:1100.66px;top:277.5px;font-size:15px;line-height:19px;height:19px;color:#1a1a1a;letter-spacing:-0.344px;">0%</div>
<div class="t" style="left:1095.23px;top:300.0px;font-size:12px;line-height:16px;height:16px;color:#4c607a;letter-spacing:0.230px;">Диск</div>
<div class="t" style="left:1173.66px;top:277.5px;font-size:15px;line-height:19px;height:19px;color:#1a1a1a;letter-spacing:-0.344px;">0%</div>
<div class="t" style="left:1170.32px;top:300.0px;font-size:12px;line-height:16px;height:16px;color:#4c607a;letter-spacing:-0.676px;">Сеть</div>
<div class="a" style="left:575px;top:319px;width:644px;height:1px;background:#a0a0a0;"></div>
<div class="a" style="left:909px;top:320px;width:293px;height:410px;background:#fff8e4;"></div>
<div class="a" style="left:909px;top:354px;width:73px;height:28px;background:#fdf1c5;"></div>
<div class="a" style="left:982px;top:354px;width:73px;height:28px;background:#fbd97c;"></div>
<div class="a" style="left:1055px;top:354px;width:73px;height:28px;background:#fdf1c5;"></div>
<div class="a" style="left:1128px;top:354px;width:73px;height:28px;background:#faecb4;"></div>
<div class="t" style="left:959.33px;top:360.0px;font-size:12px;line-height:16px;height:16px;color:#000;letter-spacing:-0.672px;">0%</div>
<div class="t" style="left:1006.64px;top:360.0px;font-size:12px;line-height:16px;height:16px;color:#000;letter-spacing:-0.364px;">92,4 МБ</div>
<div class="t" style="left:1084.13px;top:360.0px;font-size:12px;line-height:16px;height:16px;color:#000;letter-spacing:0.133px;">0 МБ/с</div>
<div class="t" style="left:1136.06px;top:360.0px;font-size:12px;line-height:16px;height:16px;color:#000;letter-spacing:0.059px;">0,1 Мбит/с</div>
<div class="t" style="left:626.00px;top:360.0px;font-size:12px;line-height:16px;height:16px;color:#000;letter-spacing:-0.096px;">Firefox</div>
<svg class="a" style="left:586px;top:363px" width="8" height="10" viewBox="0 0 8 10"><path d="M1.6 1.4 L5.8 5 L1.6 8.6 Z" fill="#fff" stroke="#a3a3a3" stroke-width="1.1" stroke-linejoin="round"/></svg>
<div class="a" style="left:909px;top:382px;width:73px;height:28px;background:#f9e9ae;"></div>
<div class="a" style="left:982px;top:382px;width:73px;height:28px;background:#f9e9ae;"></div>
<div class="a" style="left:1055px;top:382px;width:73px;height:28px;background:#fdf1c5;"></div>
<div class="a" style="left:1128px;top:382px;width:73px;height:28px;background:#fdf1c5;"></div>
<div class="t" style="left:950.41px;top:388.0px;font-size:12px;line-height:16px;height:16px;color:#000;letter-spacing:-0.586px;">2,5%</div>
<div class="t" style="left:1012.69px;top:388.0px;font-size:12px;line-height:16px;height:16px;color:#000;letter-spacing:-0.312px;">5,3 МБ</div>
<div class="t" style="left:1084.13px;top:388.0px;font-size:12px;line-height:16px;height:16px;color:#000;letter-spacing:0.133px;">0 МБ/с</div>
<div class="t" style="left:1145.20px;top:388.0px;font-size:12px;line-height:16px;height:16px;color:#000;letter-spacing:0.199px;">0 Мбит/с</div>
<div class="t" style="left:626.00px;top:388.0px;font-size:12px;line-height:16px;height:16px;color:#000;letter-spacing:-0.124px;">Диспетчер задач</div>
<svg class="a" style="left:586px;top:391px" width="8" height="10" viewBox="0 0 8 10"><path d="M1.6 1.4 L5.8 5 L1.6 8.6 Z" fill="#fff" stroke="#a3a3a3" stroke-width="1.1" stroke-linejoin="round"/></svg>
<div class="a" style="left:909px;top:410px;width:73px;height:28px;background:#fdf1c5;"></div>
<div class="a" style="left:982px;top:410px;width:73px;height:28px;background:#f9e9ae;"></div>
<div class="a" style="left:1055px;top:410px;width:73px;height:28px;background:#fdf1c5;"></div>
<div class="a" style="left:1128px;top:410px;width:73px;height:28px;background:#fdf1c5;"></div>
<div class="t" style="left:959.33px;top:416.0px;font-size:12px;line-height:16px;height:16px;color:#000;letter-spacing:-0.672px;">0%</div>
<div class="t" style="left:1006.64px;top:416.0px;font-size:12px;line-height:16px;height:16px;color:#000;letter-spacing:-0.364px;">17,8 МБ</div>
<div class="t" style="left:1084.13px;top:416.0px;font-size:12px;line-height:16px;height:16px;color:#000;letter-spacing:0.133px;">0 МБ/с</div>
<div class="t" style="left:1145.20px;top:416.0px;font-size:12px;line-height:16px;height:16px;color:#000;letter-spacing:0.199px;">0 Мбит/с</div>
<div class="t" style="left:626.00px;top:416.0px;font-size:12px;line-height:16px;height:16px;color:#000;letter-spacing:0.201px;">Проводник</div>
<svg class="a" style="left:586px;top:419px" width="8" height="10" viewBox="0 0 8 10"><path d="M1.6 1.4 L5.8 5 L1.6 8.6 Z" fill="#fff" stroke="#a3a3a3" stroke-width="1.1" stroke-linejoin="round"/></svg>
<div class="a" style="left:909px;top:476px;width:73px;height:28px;background:#fdf1c5;"></div>
<div class="a" style="left:982px;top:476px;width:73px;height:28px;background:#f9e9ae;"></div>
<div class="a" style="left:1055px;top:476px;width:73px;height:28px;background:#fdf1c5;"></div>
<div class="a" style="left:1128px;top:476px;width:73px;height:28px;background:#fdf1c5;"></div>
<div class="t" style="left:959.33px;top:482.0px;font-size:12px;line-height:16px;height:16px;color:#000;letter-spacing:-0.672px;">0%</div>
<div class="t" style="left:1012.69px;top:482.0px;font-size:12px;line-height:16px;height:16px;color:#000;letter-spacing:-0.312px;">1,6 МБ</div>
<div class="t" style="left:1084.13px;top:482.0px;font-size:12px;line-height:16px;height:16px;color:#000;letter-spacing:0.133px;">0 МБ/с</div>
<div class="t" style="left:1145.20px;top:482.0px;font-size:12px;line-height:16px;height:16px;color:#000;letter-spacing:0.199px;">0 Мбит/с</div>
<div class="t" style="left:626.00px;top:482.0px;font-size:12px;line-height:16px;height:16px;color:#000;letter-spacing:-0.800px;">47FE81.exe</div>
<div class="a" style="left:909px;top:504px;width:73px;height:28px;background:#fdf1c5;"></div>
<div class="a" style="left:982px;top:504px;width:73px;height:28px;background:#f9e39c;"></div>
<div class="a" style="left:1055px;top:504px;width:73px;height:28px;background:#fdf1c5;"></div>
<div class="a" style="left:1128px;top:504px;width:73px;height:28px;background:#fdf1c5;"></div>
<div class="t" style="left:959.33px;top:510.0px;font-size:12px;line-height:16px;height:16px;color:#000;letter-spacing:-0.672px;">0%</div>
<div class="t" style="left:1006.64px;top:510.0px;font-size:12px;line-height:16px;height:16px;color:#000;letter-spacing:-0.364px;">45,8 МБ</div>
<div class="t" style="left:1084.13px;top:510.0px;font-size:12px;line-height:16px;height:16px;color:#000;letter-spacing:0.133px;">0 МБ/с</div>
<div class="t" style="left:1145.20px;top:510.0px;font-size:12px;line-height:16px;height:16px;color:#000;letter-spacing:0.199px;">0 Мбит/с</div>
<div class="t" style="left:626.00px;top:510.0px;font-size:12px;line-height:16px;height:16px;color:#000;letter-spacing:-0.094px;">bdagent.exe</div>
<div class="a" style="left:909px;top:532px;width:73px;height:28px;background:#fdf1c5;"></div>
<div class="a" style="left:982px;top:532px;width:73px;height:28px;background:#f9e9ae;"></div>
<div class="a" style="left:1055px;top:532px;width:73px;height:28px;background:#fdf1c5;"></div>
<div class="a" style="left:1128px;top:532px;width:73px;height:28px;background:#fdf1c5;"></div>
<div class="t" style="left:959.33px;top:538.0px;font-size:12px;line-height:16px;height:16px;color:#000;letter-spacing:-0.672px;">0%</div>
<div class="t" style="left:1012.69px;top:538.0px;font-size:12px;line-height:16px;height:16px;color:#000;letter-spacing:-0.312px;">2,3 МБ</div>
<div class="t" style="left:1084.13px;top:538.0px;font-size:12px;line-height:16px;height:16px;color:#000;letter-spacing:0.133px;">0 МБ/с</div>
<div class="t" style="left:1145.20px;top:538.0px;font-size:12px;line-height:16px;height:16px;color:#000;letter-spacing:0.199px;">0 Мбит/с</div>
<div class="t" style="left:626.00px;top:538.0px;font-size:12px;line-height:16px;height:16px;color:#000;letter-spacing:0.037px;">Bitdefender Agent</div>
<svg class="a" style="left:586px;top:541px" width="8" height="10" viewBox="0 0 8 10"><path d="M1.6 1.4 L5.8 5 L1.6 8.6 Z" fill="#fff" stroke="#a3a3a3" stroke-width="1.1" stroke-linejoin="round"/></svg>
<div class="a" style="left:909px;top:560px;width:73px;height:28px;background:#fdf1c5;"></div>
<div class="a" style="left:982px;top:560px;width:73px;height:28px;background:#f9e9ae;"></div>
<div class="a" style="left:1055px;top:560px;width:73px;height:28px;background:#fdf1c5;"></div>
<div class="a" style="left:1128px;top:560px;width:73px;height:28px;background:#fdf1c5;"></div>
<div class="t" style="left:959.33px;top:566.0px;font-size:12px;line-height:16px;height:16px;color:#000;letter-spacing:-0.672px;">0%</div>
<div class="t" style="left:1012.69px;top:566.0px;font-size:12px;line-height:16px;height:16px;color:#000;letter-spacing:-0.312px;">5,7 МБ</div>
<div class="t" style="left:1084.13px;top:566.0px;font-size:12px;line-height:16px;height:16px;color:#000;letter-spacing:0.133px;">0 МБ/с</div>
<div class="t" style="left:1145.20px;top:566.0px;font-size:12px;line-height:16px;height:16px;color:#000;letter-spacing:0.199px;">0 Мбит/с</div>
<div class="t" style="left:626.00px;top:566.0px;font-size:12px;line-height:16px;height:16px;color:#000;letter-spacing:-0.120px;">Bitdefender Correlation Service</div>
<svg class="a" style="left:586px;top:569px" width="8" height="10" viewBox="0 0 8 10"><path d="M1.6 1.4 L5.8 5 L1.6 8.6 Z" fill="#fff" stroke="#a3a3a3" stroke-width="1.1" stroke-linejoin="round"/></svg>
<div class="a" style="left:909px;top:588px;width:73px;height:28px;background:#fdf1c5;"></div>
<div class="a" style="left:982px;top:588px;width:73px;height:28px;background:#fbd97c;"></div>
<div class="a" style="left:1055px;top:588px;width:73px;height:28px;background:#fdf1c5;"></div>
<div class="a" style="left:1128px;top:588px;width:73px;height:28px;background:#fdf1c5;"></div>
<div class="t" style="left:959.33px;top:594.0px;font-size:12px;line-height:16px;height:16px;color:#000;letter-spacing:-0.672px;">0%</div>
<div class="t" style="left:1006.64px;top:594.0px;font-size:12px;line-height:16px;height:16px;color:#000;letter-spacing:-0.364px;">91,8 МБ</div>
<div class="t" style="left:1084.13px;top:594.0px;font-size:12px;line-height:16px;height:16px;color:#000;letter-spacing:0.133px;">0 МБ/с</div>
<div class="t" style="left:1145.20px;top:594.0px;font-size:12px;line-height:16px;height:16px;color:#000;letter-spacing:0.199px;">0 Мбит/с</div>
<div class="t" style="left:626.00px;top:594.0px;font-size:12px;line-height:16px;height:16px;color:#000;letter-spacing:-0.192px;">Bitdefender Security Service</div>
<svg class="a" style="left:586px;top:597px" width="8" height="10" viewBox="0 0 8 10"><path d="M1.6 1.4 L5.8 5 L1.6 8.6 Z" fill="#fff" stroke="#a3a3a3" stroke-width="1.1" stroke-linejoin="round"/></svg>
<div class="a" style="left:909px;top:616px;width:73px;height:28px;background:#fdf1c5;"></div>
<div class="a" style="left:982px;top:616px;width:73px;height:28px;background:#f9e9ae;"></div>
<div class="a" style="left:1055px;top:616px;width:73px;height:28px;background:#fdf1c5;"></div>
<div class="a" style="left:1128px;top:616px;width:73px;height:28px;background:#fdf1c5;"></div>
<div class="t" style="left:959.33px;top:622.0px;font-size:12px;line-height:16px;height:16px;color:#000;letter-spacing:-0.672px;">0%</div>
<div class="t" style="left:1012.69px;top:622.0px;font-size:12px;line-height:16px;height:16px;color:#000;letter-spacing:-0.312px;">2,0 МБ</div>
<div class="t" style="left:1084.13px;top:622.0px;font-size:12px;line-height:16px;height:16px;color:#000;letter-spacing:0.133px;">0 МБ/с</div>
<div class="t" style="left:1145.20px;top:622.0px;font-size:12px;line-height:16px;height:16px;color:#000;letter-spacing:0.199px;">0 Мбит/с</div>
<div class="t" style="left:626.00px;top:622.0px;font-size:12px;line-height:16px;height:16px;color:#000;letter-spacing:-0.181px;">Bitdefender Update Service</div>
<svg class="a" style="left:586px;top:625px" width="8" height="10" viewBox="0 0 8 10"><path d="M1.6 1.4 L5.8 5 L1.6 8.6 Z" fill="#fff" stroke="#a3a3a3" stroke-width="1.1" stroke-linejoin="round"/></svg>
<div class="a" style="left:909px;top:644px;width:73px;height:28px;background:#fdf1c5;"></div>
<div class="a" style="left:982px;top:644px;width:73px;height:28px;background:#f9e9ae;"></div>
<div class="a" style="left:1055px;top:644px;width:73px;height:28px;background:#fdf1c5;"></div>
<div class="a" style="left:1128px;top:644px;width:73px;height:28px;background:#fdf1c5;"></div>
<div class="t" style="left:959.33px;top:650.0px;font-size:12px;line-height:16px;height:16px;color:#000;letter-spacing:-0.672px;">0%</div>
<div class="t" style="left:1012.69px;top:650.0px;font-size:12px;line-height:16px;height:16px;color:#000;letter-spacing:-0.312px;">1,2 МБ</div>
<div class="t" style="left:1084.13px;top:650.0px;font-size:12px;line-height:16px;height:16px;color:#000;letter-spacing:0.133px;">0 МБ/с</div>
<div class="t" style="left:1145.20px;top:650.0px;font-size:12px;line-height:16px;height:16px;color:#000;letter-spacing:0.199px;">0 Мбит/с</div>
<div class="t" style="left:626.00px;top:650.0px;font-size:12px;line-height:16px;height:16px;color:#000;letter-spacing:-0.205px;">Classic Start Menu</div>
<div class="a" style="left:909px;top:672px;width:73px;height:28px;background:#fdf1c5;"></div>
<div class="a" style="left:982px;top:672px;width:73px;height:28px;background:#f9e9ae;"></div>
<div class="a" style="left:1055px;top:672px;width:73px;height:28px;background:#fdf1c5;"></div>
<div class="a" style="left:1128px;top:672px;width:73px;height:28px;background:#fdf1c5;"></div>
<div class="t" style="left:959.33px;top:678.0px;font-size:12px;line-height:16px;height:16px;color:#000;letter-spacing:-0.672px;">0%</div>
<div class="t" style="left:1012.69px;top:678.0px;font-size:12px;line-height:16px;height:16px;color:#000;letter-spacing:-0.312px;">0,8 МБ</div>
<div class="t" style="left:1084.13px;top:678.0px;font-size:12px;line-height:16px;height:16px;color:#000;letter-spacing:0.133px;">0 МБ/с</div>
<div class="t" style="left:1145.20px;top:678.0px;font-size:12px;line-height:16px;height:16px;color:#000;letter-spacing:0.199px;">0 Мбит/с</div>
<div class="t" style="left:626.00px;top:678.0px;font-size:12px;line-height:16px;height:16px;color:#000;letter-spacing:-0.155px;">COM Surrogate</div>
<div class="a" style="left:909px;top:700px;width:73px;height:28px;background:#fdf1c5;"></div>
<div class="a" style="left:982px;top:700px;width:73px;height:28px;background:#f9e9ae;"></div>
<div class="a" style="left:1055px;top:700px;width:73px;height:28px;background:#fdf1c5;"></div>
<div class="a" style="left:1128px;top:700px;width:73px;height:28px;background:#fdf1c5;"></div>
<div class="t" style="left:959.33px;top:706.0px;font-size:12px;line-height:16px;height:16px;color:#000;letter-spacing:-0.672px;">0%</div>
<div class="t" style="left:1012.69px;top:706.0px;font-size:12px;line-height:16px;height:16px;color:#000;letter-spacing:-0.312px;">1,9 МБ</div>
<div class="t" style="left:1084.13px;top:706.0px;font-size:12px;line-height:16px;height:16px;color:#000;letter-spacing:0.133px;">0 МБ/с</div>
<div class="t" style="left:1145.20px;top:706.0px;font-size:12px;line-height:16px;height:16px;color:#000;letter-spacing:0.199px;">0 Мбит/с</div>
<div class="t" style="left:626.00px;top:706.0px;font-size:12px;line-height:16px;height:16px;color:#000;letter-spacing:-0.155px;">COM Surrogate</div>
<svg class="a" style="left:586px;top:709px" width="8" height="10" viewBox="0 0 8 10"><path d="M1.6 1.4 L5.8 5 L1.6 8.6 Z" fill="#fff" stroke="#a3a3a3" stroke-width="1.1" stroke-linejoin="round"/></svg>
<div class="t" style="left:586.00px;top:327.5px;font-size:15px;line-height:19px;height:19px;color:#2a5caa;letter-spacing:0.338px;">Приложения (3)</div>
<div class="t" style="left:586.00px;top:449.5px;font-size:15px;line-height:19px;height:19px;color:#2a5caa;letter-spacing:0.292px;">Фоновые процессы (23)</div>
<div class="a" style="left:909px;top:320px;width:1px;height:410px;background:#dcd0ab;"></div>
<div class="a" style="left:909px;top:278px;width:1px;height:42px;background:linear-gradient(to bottom,#f2f2f2,#c4c4c4);"></div>
<div class="a" style="left:982px;top:320px;width:1px;height:410px;background:#dcd0ab;"></div>
<div class="a" style="left:982px;top:278px;width:1px;height:42px;background:linear-gradient(to bottom,#f2f2f2,#c4c4c4);"></div>
<div class="a" style="left:1055px;top:320px;width:1px;height:410px;background:#dcd0ab;"></div>
<div class="a" style="left:1055px;top:278px;width:1px;height:42px;background:linear-gradient(to bottom,#f2f2f2,#c4c4c4);"></div>
<div class="a" style="left:1128px;top:320px;width:1px;height:410px;background:#dcd0ab;"></div>
<div class="a" style="left:1128px;top:278px;width:1px;height:42px;background:linear-gradient(to bottom,#f2f2f2,#c4c4c4);"></div>
<div class="a" style="left:1201px;top:320px;width:1px;height:410px;background:#dcd0ab;"></div>
<div class="a" style="left:1201px;top:278px;width:1px;height:42px;background:linear-gradient(to bottom,#f2f2f2,#c4c4c4);"></div>
<div class="a" style="left:809px;top:278px;width:1px;height:42px;background:linear-gradient(to bottom,#f2f2f2,#c4c4c4);"></div>
<div class="a" style="left:1202px;top:320px;width:17px;height:410px;background:#f0f0f0;"></div>
<div class="a" style="left:1203px;top:338px;width:15px;height:112px;background:#c2c2c2;"></div>
<div class="a" style="left:575px;top:730px;width:644px;height:1px;background:#a0a0a0;"></div>
<div class="t" style="left:609.00px;top:747.0px;font-size:12px;line-height:16px;height:16px;color:#000;letter-spacing:0.169px;">Меньше</div>
<div class="a" style="left:1127px;top:744px;width:83px;height:21px;background:#efefef;border:1px solid #d5d5d5"></div>
<div class="t" style="left:1133.00px;top:747.0px;font-size:12px;line-height:16px;height:16px;color:#868c98;letter-spacing:-0.309px;">Снять задачу</div>
<svg class="a" style="left:577px;top:196px" width="16" height="14" viewBox="0 0 16 14"><rect x="0.5" y="3.5" width="2" height="9.5" rx="0.7" fill="#e3e3e3" stroke="#9a9a9a" stroke-width="0.7"/><rect x="0.9" y="4.6" width="1.2" height="1" fill="#59b95d"/><rect x="3.6" y="0.5" width="12" height="9.6" rx="0.6" fill="#e9edf0" stroke="#a3a9af" stroke-width="0.8"/><rect x="4.7" y="1.6" width="9.8" height="7.4" fill="url(#gMon)"/><path d="M4.9 6.2 L6.8 3.4 L8.4 5.2 L9.6 3.6 L11.6 6.6 L14.3 4.4" fill="none" stroke="#1d77c5" stroke-width="1"/><rect x="8.4" y="10.1" width="2.6" height="1.6" fill="#c2c6ca"/><path d="M6 13.5 Q9.7 11.2 13.4 13.5 Z" fill="#cfd3d6" stroke="#a3a9af" stroke-width="0.5"/></svg>
<div class="a" style="left:1131px;top:200px;width:8px;height:2px;background:#1a1a1a;"></div>
<svg class="a" style="left:1157px;top:194px" width="11" height="10" viewBox="0 0 11 10"><rect x="0.5" y="1" width="9.4" height="7.6" fill="none" stroke="#1a1a1a" stroke-width="1"/><rect x="0" y="0" width="10.4" height="2.6" fill="#1a1a1a"/></svg>
<svg class="a" style="left:1193px;top:193.6px" width="10" height="10" viewBox="0 0 10 10"><path d="M1.3 1.3 L8.7 8.7 M8.7 1.3 L1.3 8.7" stroke="#fff" stroke-width="1.7"/></svg>
<svg class="a" style="left:1187px;top:248px" width="5" height="7" viewBox="0 0 5 7"><path d="M4.4 0.2 V6.8 L0.6 3.5 Z" fill="#000"/></svg>
<svg class="a" style="left:1206px;top:248px" width="5" height="7" viewBox="0 0 5 7"><path d="M0.6 0.2 V6.8 L4.4 3.5 Z" fill="#000"/></svg>
<svg class="a" style="left:684px;top:282px" width="8" height="4" viewBox="0 0 8 4"><path d="M0.6 3.6 L4 0.6 L7.4 3.6 Z" fill="#7fa4c4"/></svg>
<svg class="a" style="left:1206.5px;top:326.4px" width="8" height="6" viewBox="0 0 8 6"><path d="M0.8 5 L4 1.8 L7.2 5" fill="none" stroke="#505050" stroke-width="2"/></svg>
<svg class="a" style="left:1206.5px;top:717.6px" width="8" height="6" viewBox="0 0 8 6"><path d="M0.8 1 L4 4.2 L7.2 1" fill="none" stroke="#505050" stroke-width="2"/></svg>
<svg class="a" style="left:582px;top:744px" width="20" height="20" viewBox="0 0 20 20"><circle cx="10" cy="10" r="9" fill="#fff" stroke="#222" stroke-width="1.1"/><path d="M6.4 11.8 L10 8.2 L13.6 11.8" fill="none" stroke="#222" stroke-width="1.7"/></svg>
<svg class="a" style="left:604px;top:360px" width="16" height="16" viewBox="0 0 32 32"><circle cx="16" cy="17" r="14.6" fill="url(#gFxL)"/><circle cx="17" cy="13.2" r="9.6" fill="url(#gGlobe)"/><path d="M4.6 6.6 Q6.6 8.4 8.4 8.2 Q9.4 6.4 11.4 5.4 Q10.8 7.6 12 9 Q14 9.4 15.4 11 Q14.6 12.4 12.8 12.6 Q13.6 14 12.2 15.6 Q13.6 19.2 17.2 19.4 Q20.2 19.4 21.6 17.6 Q20.4 21.6 16.6 22 Q19.6 24.2 23.6 21.4 Q20.6 27.6 14 26.4 Q4.6 24 3.4 14.6 Q3.2 10 4.6 6.6 Z" fill="url(#gFxL)"/><path d="M12 17 Q14.2 20.4 18.2 19.8 Q14.8 21.4 13.6 20.8 Q12.4 19.2 12 17 Z" fill="#7a1f6a" opacity="0.55"/><path d="M20.9 0.4 Q31 5 31.4 17 Q31 23 27.4 27.4 Q29.4 21.6 26.8 17.4 Q25 21.4 21.4 22.8 Q24.8 18 23.4 13.6 Q22.6 10.6 20.6 8.4 Q19.2 5 20.9 0.4 Z" fill="url(#gFxY)"/></svg>
<svg class="a" style="left:604px;top:390px" width="16" height="14" viewBox="0 0 16 14"><rect x="0.5" y="3.5" width="2" height="9.5" rx="0.7" fill="#e3e3e3" stroke="#9a9a9a" stroke-width="0.7"/><rect x="0.9" y="4.6" width="1.2" height="1" fill="#59b95d"/><rect x="3.6" y="0.5" width="12" height="9.6" rx="0.6" fill="#e9edf0" stroke="#a3a9af" stroke-width="0.8"/><rect x="4.7" y="1.6" width="9.8" height="7.4" fill="url(#gMon)"/><path d="M4.9 6.2 L6.8 3.4 L8.4 5.2 L9.6 3.6 L11.6 6.6 L14.3 4.4" fill="none" stroke="#1d77c5" stroke-width="1"/><rect x="8.4" y="10.1" width="2.6" height="1.6" fill="#c2c6ca"/><path d="M6 13.5 Q9.7 11.2 13.4 13.5 Z" fill="#cfd3d6" stroke="#a3a9af" stroke-width="0.5"/></svg>
<svg class="a" style="left:604px;top:418px" width="16" height="14" viewBox="0 0 16 14"><path d="M0.6 2.4 Q0.6 0.8 2 0.8 H6 L7.2 2 H14.2 Q15.4 2 15.4 3.2 V11 Q15.4 12 14.4 12 H1.6 Q0.6 12 0.6 11 Z" fill="url(#gFoldV)" stroke="#dcc463" stroke-width="0.8"/><rect x="1.4" y="1.4" width="2.2" height="1" fill="#7cc24a"/><path d="M3 13.6 V8.6 Q3 7 4.6 7 H11.4 Q13 7 13 8.6 V13.6 H10.4 V10.4 Q10.4 9.8 9.8 9.8 H6.2 Q5.6 9.8 5.6 10.4 V13.6 Z" fill="url(#gBlueV)" stroke="#2f86d6" stroke-width="0.6"/></svg>
<svg class="a" style="left:604px;top:482px" width="16" height="16" viewBox="0 0 16 16"><ellipse cx="8" cy="8.2" rx="7.3" ry="7" fill="#ee7c70" stroke="#161616" stroke-width="1.3"/><path d="M1.6 10 Q8 16 14.4 10 Q13 15 8 15 Q3 15 1.6 10 Z" fill="#b9451f" opacity="0.75"/><ellipse cx="6.4" cy="8.6" rx="3.4" ry="2.2" fill="#f9b8ae" opacity="0.7"/><path d="M4.4 3.4 Q8 0.8 11.8 3.2 Q11 6 8.2 5 Q5.6 6.2 4.4 3.4 Z" fill="#2c8a35" stroke="#123f17" stroke-width="0.5"/><circle cx="9.4" cy="5.2" r="0.7" fill="#fff"/></svg>
<svg class="a" style="left:604px;top:510px" width="16" height="16" viewBox="0 0 16 16"><rect x="0" y="0" width="16" height="16" rx="2.56" fill="#d60a0a"/><text x="8.0" y="12.48" font-family="Liberation Serif,serif" font-weight="bold" font-size="12.16" fill="#fff" text-anchor="middle">B</text></svg>
<svg class="a" style="left:604px;top:540px" width="16" height="13" viewBox="0 0 16 13"><rect x="0.5" y="0.5" width="15" height="12" fill="#fcfcfc" stroke="#8f959b" stroke-width="1"/><rect x="1" y="1" width="14" height="2" fill="#dfe3e6"/><rect x="2.5" y="4.5" width="5.5" height="5.5" fill="#3f8f8a"/><rect x="2.5" y="4.5" width="5.5" height="2.5" fill="#5aa6b0"/><rect x="9.5" y="5" width="4" height="1" fill="#9aa0a6"/><rect x="9.5" y="7" width="4" height="1" fill="#9aa0a6"/><rect x="9.5" y="9" width="4" height="1" fill="#9aa0a6"/></svg>
<div class="t" style="left:606.5px;top:566px;font-size:14px;line-height:16px;height:16px;color:#d8262c;font-weight:bold">B</div>
<div class="t" style="left:606.5px;top:594px;font-size:14px;line-height:16px;height:16px;color:#d8262c;font-weight:bold">B</div>
<div class="t" style="left:606.5px;top:622px;font-size:14px;line-height:16px;height:16px;color:#d8262c;font-weight:bold">B</div>
<svg class="a" style="left:604px;top:651px" width="16" height="14" viewBox="0 0 24 21"><path d="M5 20.4 L6.4 17 L1.29 14.96 Q-1.49 12.19 1.11 9.27 Q0.18 5.48 3.96 4.28 Q5.13 0.52 9.05 1.38 Q12.00 -1.30 14.95 1.38 Q18.87 0.52 20.04 4.28 Q23.82 5.48 22.89 9.27 Q25.49 12.19 22.71 14.96 L17.6 17 L19 20.4 Z" fill="url(#gShell)" stroke="#e9a15c" stroke-width="1.2" stroke-linejoin="round"/><path d="M9.6 19.31 A2.4 2.4 0 0 1 14.4 19.31" fill="none" stroke="#1f86c8" stroke-opacity="0.5" stroke-width="1"/><path d="M7.4 19.05 A4.6 4.6 0 0 1 16.6 19.05" fill="none" stroke="#1f86c8" stroke-opacity="0.5" stroke-width="1"/><path d="M5.2 18.78 A6.8 6.8 0 0 1 18.8 18.78" fill="none" stroke="#1f86c8" stroke-opacity="0.5" stroke-width="1"/></svg>
<svg class="a" style="left:604px;top:680px" width="16" height="13" viewBox="0 0 16 13"><rect x="0.5" y="0.5" width="15" height="12" fill="#fcfcfc" stroke="#8f959b" stroke-width="1"/><rect x="1" y="1" width="14" height="2" fill="#dfe3e6"/><rect x="2.5" y="4.5" width="5.5" height="5.5" fill="#3f8f8a"/><rect x="2.5" y="4.5" width="5.5" height="2.5" fill="#5aa6b0"/><rect x="9.5" y="5" width="4" height="1" fill="#9aa0a6"/><rect x="9.5" y="7" width="4" height="1" fill="#9aa0a6"/><rect x="9.5" y="9" width="4" height="1" fill="#9aa0a6"/></svg>
<svg class="a" style="left:604px;top:708px" width="16" height="13" viewBox="0 0 16 13"><rect x="0.5" y="0.5" width="15" height="12" fill="#fcfcfc" stroke="#8f959b" stroke-width="1"/><rect x="1" y="1" width="14" height="2" fill="#dfe3e6"/><rect x="2.5" y="4.5" width="5.5" height="5.5" fill="#3f8f8a"/><rect x="2.5" y="4.5" width="5.5" height="2.5" fill="#5aa6b0"/><rect x="9.5" y="5" width="4" height="1" fill="#9aa0a6"/><rect x="9.5" y="7" width="4" height="1" fill="#9aa0a6"/><rect x="9.5" y="9" width="4" height="1" fill="#9aa0a6"/></svg>
<div class="a" style="left:0px;top:860px;width:1440px;height:40px;background:#8e8b17;"></div>
<div class="a" style="left:0px;top:860px;width:1440px;height:1px;background:#7d7a12;"></div>
<svg class="a" style="left:8px;top:861px" width="38" height="38" viewBox="0 0 38 38"><circle cx="19" cy="19" r="18.4" fill="url(#gOrb)" stroke="#a9cdd2" stroke-width="1"/><path d="M2.2 17 A17 17 0 0 1 35.8 17 Q19 24 2.2 17 Z" fill="#fff" opacity="0.10"/></svg>
<svg class="a" style="left:14.5px;top:867.6px" width="25.4" height="22.4" viewBox="0 0 24 21"><path d="M5 20.4 L6.4 17 L1.29 14.96 Q-1.49 12.19 1.11 9.27 Q0.18 5.48 3.96 4.28 Q5.13 0.52 9.05 1.38 Q12.00 -1.30 14.95 1.38 Q18.87 0.52 20.04 4.28 Q23.82 5.48 22.89 9.27 Q25.49 12.19 22.71 14.96 L17.6 17 L19 20.4 Z" fill="url(#gOrbShell)" stroke="#f0cf7a" stroke-width="1.2" stroke-linejoin="round"/><path d="M9.6 19.31 A2.4 2.4 0 0 1 14.4 19.31" fill="none" stroke="#8fd3e0" stroke-opacity="0.5" stroke-width="1"/><path d="M7.4 19.05 A4.6 4.6 0 0 1 16.6 19.05" fill="none" stroke="#8fd3e0" stroke-opacity="0.5" stroke-width="1"/><path d="M5.2 18.78 A6.8 6.8 0 0 1 18.8 18.78" fill="none" stroke="#8fd3e0" stroke-opacity="0.5" stroke-width="1"/></svg>
<svg class="a" style="left:73px;top:863px" width="34" height="34" viewBox="0 0 34 34"><ellipse cx="16" cy="15" rx="17" ry="6.6" transform="rotate(-42 16 15)" fill="none" stroke="#e9b90f" stroke-width="2.2"/><circle cx="17.5" cy="17" r="13.2" fill="url(#gIE)" stroke="#2a93d2" stroke-width="0.8"/><path d="M11.6 14.6 A5.9 5.4 0 0 1 23.4 14.6 Z" fill="#8e8b17" stroke="#2a93d2" stroke-width="0.5"/><path d="M11.8 19.2 H31 Q30.8 21.4 30 22.6 H23 Q20.8 25.4 17.4 25 Q12.6 24.4 11.8 19.2 Z" fill="#8e8b17" stroke="#2a93d2" stroke-width="0.5"/><path d="M3.4 29.6 Q-1.6 24 6.4 13.4 Q14 4 24 1.6 Q31.6 0.4 30.6 6.4" fill="none" stroke="#f6cf2a" stroke-width="2.4" stroke-linecap="round"/></svg>
<div class="a" style="left:122px;top:861px;width:59px;height:38px;background:#a4a23d;border:1px solid #bdbb6e"></div>
<div class="a" style="left:184px;top:861px;width:59px;height:38px;background:#a4a23d;border:1px solid #bdbb6e"></div>
<div class="a" style="left:246px;top:861px;width:59px;height:38px;background:#b9b873;border:1px solid #e6e5c4"></div>
<svg class="a" style="left:135px;top:867px" width="31.5" height="29.5" viewBox="0 0 32 30"><path d="M1 5 Q1 2.6 3.4 2.6 H11 L13 5 H28.6 Q31 5 31 7.4 V23 Q31 25 29 25 H3 Q1 25 1 23 Z" fill="url(#gFoldV)" stroke="#dcc463" stroke-width="1"/><rect x="2.4" y="3.2" width="9" height="2" fill="#fdfdf6"/><rect x="11.4" y="5.2" width="9" height="2" fill="#fdfdf6"/><rect x="19" y="7" width="11" height="2" fill="#fdfdf6"/><rect x="3" y="3.4" width="3.6" height="1.8" fill="#3cb44a"/><rect x="12" y="5.6" width="3.6" height="1.8" fill="#d9362c"/><rect x="19" y="7.2" width="3.6" height="1.8" fill="#2f86d6"/><path d="M5.4 28.6 V18.8 Q5.4 16 8.2 16 H23.8 Q26.6 16 26.6 18.8 V28.6 H21.6 V22.6 Q21.6 21.4 20.4 21.4 H11.6 Q10.4 21.4 10.4 22.6 V28.6 Z" fill="url(#gBlueL)" stroke="#6fbdf0" stroke-width="0.9"/><path d="M7 17.4 H25" stroke="#d6ecfb" stroke-width="1.2"/></svg>
<svg class="a" style="left:198px;top:864px" width="31" height="31" viewBox="0 0 32 32"><circle cx="16" cy="17" r="14.6" fill="url(#gFxL)"/><circle cx="17" cy="13.2" r="9.6" fill="url(#gGlobe)"/><path d="M4.6 6.6 Q6.6 8.4 8.4 8.2 Q9.4 6.4 11.4 5.4 Q10.8 7.6 12 9 Q14 9.4 15.4 11 Q14.6 12.4 12.8 12.6 Q13.6 14 12.2 15.6 Q13.6 19.2 17.2 19.4 Q20.2 19.4 21.6 17.6 Q20.4 21.6 16.6 22 Q19.6 24.2 23.6 21.4 Q20.6 27.6 14 26.4 Q4.6 24 3.4 14.6 Q3.2 10 4.6 6.6 Z" fill="url(#gFxL)"/><path d="M12 17 Q14.2 20.4 18.2 19.8 Q14.8 21.4 13.6 20.8 Q12.4 19.2 12 17 Z" fill="#7a1f6a" opacity="0.55"/><path d="M20.9 0.4 Q31 5 31.4 17 Q31 23 27.4 27.4 Q29.4 21.6 26.8 17.4 Q25 21.4 21.4 22.8 Q24.8 18 23.4 13.6 Q22.6 10.6 20.6 8.4 Q19.2 5 20.9 0.4 Z" fill="url(#gFxY)"/></svg>
<svg class="a" style="left:258px;top:866px" width="34" height="30" viewBox="0 0 34 30"><path d="M3 8.5 L7 7 V24.5 L3 25.5 Z" fill="#e6e8ea" stroke="#a6abb0" stroke-width="0.8"/><path d="M7 7 L9.6 8 V24 L7 24.5 Z" fill="#c9cdd1" stroke="#a6abb0" stroke-width="0.6"/><path d="M9 4.6 L31 2.6 V21 L9 20 Z" fill="#eef1f3" stroke="#adb2b7" stroke-width="1"/><path d="M10.8 6.2 L29.2 4.6 V19.2 L10.8 18.4 Z" fill="url(#gMon)"/><path d="M11.2 15 L14 14.6 L15.6 8 L17.2 15.2 L19.4 13.6 L21.6 14.4 L23.4 10 L25 14.6 L28.8 13.6" fill="none" stroke="#2b7fc9" stroke-width="1.2"/><path d="M18 21 H24 V24.5 H18 Z" fill="#c9cdd1"/><ellipse cx="21" cy="26.6" rx="8" ry="2.6" fill="#dfe2e4" stroke="#adb2b7" stroke-width="0.8"/></svg>
<svg class="a" style="left:1170px;top:873px" width="16" height="15.5" viewBox="0 0 16 16"><rect x="0" y="0" width="16" height="16" rx="2.56" fill="#d60a0a"/><text x="8.0" y="12.48" font-family="Liberation Serif,serif" font-weight="bold" font-size="12.16" fill="#fff" text-anchor="middle">B</text></svg>
<svg class="a" style="left:1197px;top:874px" width="11.5" height="14" viewBox="0 0 14 17"><rect x="0.5" y="0.5" width="12" height="12.6" fill="#7c7040"/><path d="M0.5 14.6 H13" stroke="#f6f3dc" stroke-width="1.6"/><path d="M13 0.5 V15" stroke="#f6f3dc" stroke-width="1.4"/><rect x="1.6" y="1.6" width="1" height="1" fill="#a89a5c"/><rect x="1.6" y="3.8000000000000003" width="1" height="1" fill="#a89a5c"/><rect x="1.6" y="6.0" width="1" height="1" fill="#a89a5c"/><rect x="1.6" y="8.200000000000001" width="1" height="1" fill="#a89a5c"/><rect x="1.6" y="10.4" width="1" height="1" fill="#a89a5c"/><rect x="3.8000000000000003" y="1.6" width="1" height="1" fill="#a89a5c"/><rect x="3.8000000000000003" y="3.8000000000000003" width="1" height="1" fill="#a89a5c"/><rect x="3.8000000000000003" y="6.0" width="1" height="1" fill="#a89a5c"/><rect x="3.8000000000000003" y="8.200000000000001" width="1" height="1" fill="#a89a5c"/><rect x="3.8000000000000003" y="10.4" width="1" height="1" fill="#a89a5c"/><rect x="6.0" y="1.6" width="1" height="1" fill="#a89a5c"/><rect x="6.0" y="3.8000000000000003" width="1" height="1" fill="#a89a5c"/><rect x="6.0" y="6.0" width="1" height="1" fill="#a89a5c"/><rect x="6.0" y="8.200000000000001" width="1" height="1" fill="#a89a5c"/><rect x="6.0" y="10.4" width="1" height="1" fill="#a89a5c"/><rect x="8.200000000000001" y="1.6" width="1" height="1" fill="#a89a5c"/><rect x="8.200000000000001" y="3.8000000000000003" width="1" height="1" fill="#a89a5c"/><rect x="8.200000000000001" y="6.0" width="1" height="1" fill="#a89a5c"/><rect x="8.200000000000001" y="8.200000000000001" width="1" height="1" fill="#a89a5c"/><rect x="8.200000000000001" y="10.4" width="1" height="1" fill="#a89a5c"/><rect x="10.4" y="1.6" width="1" height="1" fill="#a89a5c"/><rect x="10.4" y="3.8000000000000003" width="1" height="1" fill="#a89a5c"/><rect x="10.4" y="6.0" width="1" height="1" fill="#a89a5c"/><rect x="10.4" y="8.200000000000001" width="1" height="1" fill="#a89a5c"/><rect x="10.4" y="10.4" width="1" height="1" fill="#a89a5c"/></svg>
<svg class="a" style="left:1218px;top:873px" width="15" height="14" viewBox="0 0 19 15"><rect x="0.5" y="0.5" width="18" height="14" rx="1.5" fill="#7f868c" stroke="#5f666c" stroke-width="1"/><rect x="1.5" y="1.5" width="16" height="3" fill="#9aa1a7"/><text x="9.6" y="11.6" font-family="Liberation Sans,sans-serif" font-weight="bold" font-size="9" fill="#fff" text-anchor="middle">vm</text></svg>
<svg class="a" style="left:1242px;top:872.5px" width="16" height="17.5" viewBox="0 0 18 20"><rect x="3.4" y="0.6" width="5.6" height="5" fill="#c9ccd0" stroke="#7a7f85" stroke-width="0.8"/><path d="M1.6 5.6 H10.8 V12 Q10.8 15 7.6 15.6 V18.6 H4.8 V15.6 Q1.6 15 1.6 12 Z" fill="#80868c" stroke="#5f656b" stroke-width="0.8"/><circle cx="11.6" cy="14.4" r="4.4" fill="#2fb344" stroke="#e9f6ea" stroke-width="0.8"/><path d="M9.4 14.6 L11 16.4 L13.8 12.6" fill="none" stroke="#fff" stroke-width="1.4"/></svg>
<svg class="a" style="left:1266px;top:873px" width="16" height="15" viewBox="0 0 18 18"><rect x="0.8" y="0.8" width="5" height="8" rx="1.4" fill="none" stroke="#fff" stroke-width="1.4"/><circle cx="3.3" cy="3.4" r="0.9" fill="#fff"/><path d="M3.3 8.8 V14 H8" fill="none" stroke="#fff" stroke-width="1.3"/><rect x="7" y="4" width="9.6" height="8" fill="none" stroke="#fff" stroke-width="1.4"/><path d="M11.8 12 V15 M8.4 15.6 H15.4" stroke="#fff" stroke-width="1.4"/></svg>
<svg class="a" style="left:1290px;top:873px" width="16" height="15" viewBox="0 0 17 16"><path d="M0.8 5.4 H3.6 L8 1 V15 L3.6 10.6 H0.8 Z" fill="none" stroke="#fff" stroke-width="1.2" stroke-linejoin="round"/><path d="M10 5.6 Q11.6 8 10 10.4 M12 3.8 Q14.6 8 12 12.2 M14 2.4 Q17.4 8 14 13.6" fill="none" stroke="#fff" stroke-width="1.1"/></svg>
<div class="t" style="left:1320.00px;top:873.0px;font-size:12px;line-height:16px;height:16px;color:#fff;letter-spacing:-0.800px;">ENG</div>
<div class="t" style="left:1374.00px;top:865.0px;font-size:12px;line-height:16px;height:16px;color:#fff;letter-spacing:-0.603px;">15:21</div>
<div class="t" style="left:1360.00px;top:882.0px;font-size:12px;line-height:16px;height:16px;color:#fff;letter-spacing:-0.514px;">28.11.2017</div>
</body></html>
